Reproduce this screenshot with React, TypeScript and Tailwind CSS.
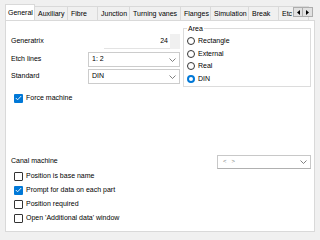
import React from "react";

const tabs = [
  { label: "General", w: "w-[30px]" },
  { label: "Auxiliary", w: "w-[33px]" },
  { label: "Fibre", w: "w-[30px]" },
  { label: "Junction", w: "w-[32px]" },
  { label: "Turning vanes", w: "w-[51px]" },
  { label: "Flanges", w: "w-[30px]" },
  { label: "Simulation", w: "w-[38px]" },
  { label: "Break", w: "w-[30px]" },
  { label: "Etc", w: "w-[30px]" },
];

function Chevron() {
  return (
    <svg width="7" height="4" viewBox="0 0 7 4" className="shrink-0">
      <polyline points="0.5,0.5 3.5,3.5 6.5,0.5" fill="none" stroke="#606060" strokeWidth="0.8" />
    </svg>
  );
}

function Combo({ value }: { value: string }) {
  return (
    <div className="flex h-[15px] w-[92px] items-center justify-between border border-[#cccccc] bg-white pl-[3px] pr-[3px]">
      <span>{value}</span>
      <Chevron />
    </div>
  );
}

function Check({ checked }: { checked?: boolean }) {
  if (checked) {
    return (
      <div className="flex h-[9px] w-[9px] items-center justify-center rounded-[1px] bg-[#0078d7]">
        <svg width="7" height="6" viewBox="0 0 7 6">
          <polyline points="0.8,3 2.6,4.8 6.2,1" fill="none" stroke="white" strokeWidth="0.9" />
        </svg>
      </div>
    );
  }
  return <div className="h-[9px] w-[9px] rounded-[1px] border border-[#333333] bg-white" />;
}

function Radio({ label, checked }: { label: string; checked?: boolean }) {
  return (
    <div className="flex h-[12.5px] items-center gap-[3px]">
      {checked ? (
        <div className="h-[8px] w-[8px] rounded-full border-[2.5px] border-[#0078d7] bg-white" />
      ) : (
        <div className="h-[8px] w-[8px] rounded-full border border-[#333333] bg-white" />
      )}
      <span>{label}</span>
    </div>
  );
}

function CheckRow({ label, checked }: { label: string; checked?: boolean }) {
  return (
    <div className="flex h-[14px] items-center gap-[3px] pl-[3px]">
      <Check checked={checked} />
      <span>{label}</span>
    </div>
  );
}

export default function App() {
  return (
    <div
      className="relative h-[240px] w-[320px] overflow-hidden bg-[#f0f0f0] text-[7px] text-black"
      style={{ fontFamily: '"Liberation Sans", Arial, sans-serif' }}
    >
      {/* tab strip */}
      <div className="relative flex h-[20px] items-end overflow-hidden pl-[5px] pr-[27px]">
        {tabs.map((t, i) =>
          i === 0 ? (
            <div
              key={t.label}
              className={`relative z-10 -mb-px flex h-[17px] shrink-0 items-center border border-b-0 border-[#d9d9d9] bg-white pl-[2px] ${t.w}`}
            >
              {t.label}
            </div>
          ) : (
            <div
              key={t.label}
              className={`flex h-[14px] shrink-0 items-center border-t border-r border-[#d9d9d9] pl-[3px] pt-px ${t.w}`}
            >
              {t.label}
            </div>
          )
        )}
        <div className="absolute right-[7px] top-[7px] flex h-[10px]">
          <div className="flex w-[10px] items-center justify-center border border-[#adadad] bg-[#e1e1e1]">
            <svg width="3" height="5" viewBox="0 0 3 5"><polygon points="3,0 3,5 0,2.5" fill="#000" /></svg>
          </div>
          <div className="flex w-[10px] items-center justify-center border border-l-0 border-[#adadad] bg-[#e1e1e1]">
            <svg width="3" height="5" viewBox="0 0 3 5"><polygon points="0,0 0,5 3,2.5" fill="#000" /></svg>
          </div>
        </div>
      </div>

      {/* page */}
      <div className="ml-[5px] h-[212px] w-[310px] border border-[#d9d9d9] bg-white pl-[5px]">
        <div className="flex pt-[7px]">
          <div className="flex w-[172px] flex-col">
            <div className="mt-[6px] flex h-[15px] items-center">
              <span className="w-[93px]">Generatrix</span>
              <div className="flex h-[15px] w-[66px] items-center justify-end border-b border-[#e3e3e3] bg-white pr-[2px]">24</div>
              <div className="h-[15px] w-[10px] bg-[#f0f0f0]" />
            </div>
            <div className="mt-[3px] flex h-[15px] items-center">
              <span className="w-[77px]">Etch lines</span>
              <Combo value="1: 2" />
            </div>
            <div className="mt-[2px] flex h-[15px] items-center">
              <span className="w-[77px]">Standard</span>
              <Combo value="DIN" />
            </div>
          </div>
          <div className="relative h-[59px] w-[128px] border border-[#dcdcdc] pl-[3px] pt-[6px]">
            <span className="absolute -top-[5px] left-[3px] bg-white px-[1px] leading-[9px]">Area</span>
            <Radio label="Rectangle" />
            <Radio label="External" />
            <Radio label="Real" />
            <Radio label="DIN" checked />
          </div>
        </div>

        <div className="mt-[4px]">
          <CheckRow label="Force machine" checked />
        </div>

        <div className="mt-[50px] flex h-[13px] items-center">
          <span className="w-[206px]">Canal machine</span>
          <div className="flex h-[14px] w-[94px] items-center justify-between border border-[#c8c8c8] border-b-[#b0b0b0] bg-white pl-[5px] pr-[3px]">
            <span className="text-[6px] tracking-[5px] text-[#808080]">&lt;&gt;</span>
            <Chevron />
          </div>
        </div>

        <div className="mt-[1px]">
          <CheckRow label="Position is base name" />
          <CheckRow label="Prompt for data on each part" checked />
          <CheckRow label="Position required" />
          <CheckRow label="Open 'Additional data' window" />
        </div>
      </div>
    </div>
  );
}
